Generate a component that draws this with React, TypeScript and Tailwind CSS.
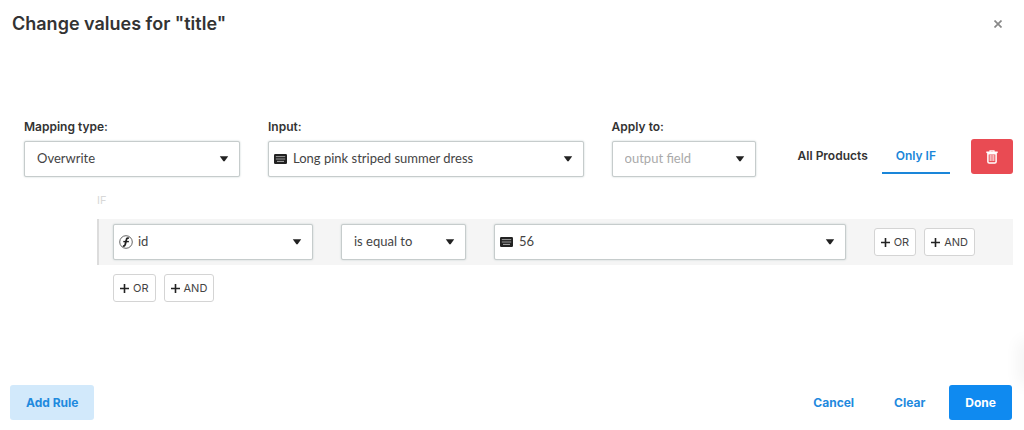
import { useState } from 'react';
import type { ReactNode } from 'react';
import clsx from 'clsx';

interface SelectFieldProps {
  id: string;
  label: string;
  options: string[];
  icon?: ReactNode;
  hideLabel?: boolean;
  muted?: boolean;
  className?: string;
}

function KeyboardIcon() {
  return (
    <svg viewBox="0 0 13 10" className="h-[10px] w-[13px]" aria-hidden="true">
      <rect width="13" height="10" rx="1.2" fill="#222" />
      <path d="M1.8 2.6h9.4M1.8 5h9.4" stroke="#aaa" strokeWidth="0.9" />
      <path d="M3 7.4h7" stroke="#bbb" strokeWidth="0.9" />
    </svg>
  );
}

function FunctionIcon() {
  return (
    <svg viewBox="0 0 14 14" className="h-[14px] w-[14px]" fill="none" stroke="#222" aria-hidden="true">
      <circle cx="7" cy="7" r="6.3" strokeWidth="0.7" />
      <path d="M10 3.3C8.4 2.6 7.6 3.5 7.3 5L6.3 9.2C6 10.8 5.2 11.4 3.9 10.8" strokeWidth="1.8" />
      <path d="M4.3 6.6h5.6" strokeWidth="1.4" />
    </svg>
  );
}

function TrashIcon() {
  return (
    <svg viewBox="0 0 12 14" className="h-[14px] w-[12px]" fill="none" stroke="#fff" aria-hidden="true">
      <path d="M0.3 2.3h11.4" strokeWidth="1.6" />
      <path d="M4 2V0.8h4V2" strokeWidth="1.2" />
      <path d="M1.9 3.8v8c0 .8.5 1.3 1.3 1.3h5.6c.8 0 1.3-.5 1.3-1.3v-8z" strokeWidth="1.5" />
      <path d="M4.2 5v6M6 5v6M7.8 5v6" strokeWidth="0.9" />
    </svg>
  );
}

function PlusIcon() {
  return (
    <svg viewBox="0 0 9 9" className="h-[9px] w-[9px]" stroke="#222" strokeWidth="1.6" aria-hidden="true">
      <path d="M4.5 0v9M0 4.5h9" />
    </svg>
  );
}

function SelectField({ id, label, options, icon, hideLabel, muted, className }: SelectFieldProps) {
  return (
    <div className={className}>
      {!hideLabel && (
        <label htmlFor={id} className="mb-1 block text-[12px] leading-5 font-semibold text-[#333]">
          {label}
        </label>
      )}
      <div className="relative">
        {icon && (
          <span className="pointer-events-none absolute inset-y-0 left-[6px] flex items-center">{icon}</span>
        )}
        <select
          id={id}
          aria-label={hideLabel ? label : undefined}
          className={clsx(
            "block h-9 w-full appearance-none rounded-xs border border-[#c6cccc] bg-white pr-7 font-['Lato',sans-serif] text-[13px] shadow-[0_0_2px_#c3cccc]",
            icon ? 'pl-6' : 'pl-3',
            muted ? 'text-[#aaa]' : 'text-[#444]'
          )}
        >
          {options.map((option) => (
            <option key={option}>{option}</option>
          ))}
        </select>
        <span className="pointer-events-none absolute inset-y-0 right-[11px] flex items-center">
          <svg viewBox="0 0 10 6" className="h-[6px] w-[10px]" aria-hidden="true">
            <path d="M0.8 0.3h8.4L5.8 5q-.8.9-1.6 0z" fill="#222" />
          </svg>
        </span>
      </div>
    </div>
  );
}

function ConditionButtons() {
  return (
    <div className="flex gap-2">
      {['OR', 'AND'].map((operator) => (
        <button
          key={operator}
          type="button"
          className="flex h-7 items-center gap-1 rounded-[3px] border border-[#d4d4d4] bg-white px-[6px] text-[11px] text-[#444]"
        >
          <PlusIcon />
          {operator}
        </button>
      ))}
    </div>
  );
}

export default function App() {
  const [scope, setScope] = useState('Only IF');

  return (
    <main className="relative flex min-h-screen flex-col overflow-hidden bg-white font-['Inter',sans-serif] text-[#333]">
      <header className="flex items-center justify-between py-3 pr-5 pl-3">
        <h1 className="text-[18px] leading-6 font-semibold">Change values for "title"</h1>
        <button type="button" aria-label="Close" className="p-[2px]">
          <svg viewBox="0 0 8 8" className="h-2 w-2" stroke="#888" strokeWidth="1.7" aria-hidden="true">
            <path d="M0.5 0.5l7 7M7.5 0.5l-7 7" />
          </svg>
        </button>
      </header>

      <section className="mt-[69px] flex items-end pr-[11px] pl-6">
        <SelectField id="mapping-type" label="Mapping type:" options={['Overwrite']} className="mr-7 w-[216px]" />
        <SelectField
          id="input-value"
          label="Input:"
          options={['Long pink striped summer dress']}
          icon={<KeyboardIcon />}
          className="mr-7 min-w-0 flex-1"
        />
        <SelectField id="apply-to" label="Apply to:" options={['output field']} muted className="w-36" />
        <div className="mb-[3px] ml-7 flex">
          {['All Products', 'Only IF'].map((name) => (
            <button
              key={name}
              type="button"
              onClick={() => setScope(name)}
              className={clsx(
                'h-[34px] border-b-2 px-[14px] text-[12px] font-semibold whitespace-nowrap',
                scope === name ? 'border-[#1a86d9] text-[#1a86d9]' : 'border-transparent'
              )}
            >
              {name}
            </button>
          ))}
        </div>
        <button
          type="button"
          aria-label="Delete rule"
          className="mb-[3px] ml-[21px] flex h-[35px] w-[42px] items-center justify-center rounded-[3px] bg-[#e94b53]"
        >
          <TrashIcon />
        </button>
      </section>

      <section className="mt-[15px] pr-[11px] pl-[97px]">
        <p className="text-[11px] leading-4 text-[#d8d8d8]">IF</p>
        <div className="mt-[11px] flex h-[46px] items-center border-l-2 border-[#dcdcdc] bg-[#f5f5f5] pr-[38px] pl-[14px]">
          <SelectField id="field" label="Field" options={['id']} icon={<FunctionIcon />} hideLabel className="mr-7 w-[200px]" />
          <SelectField id="operator" label="Operator" options={['is equal to']} hideLabel className="mr-7 w-[125px]" />
          <SelectField
            id="compare-value"
            label="Value"
            options={['56']}
            icon={<KeyboardIcon />}
            hideLabel
            className="mr-7 min-w-0 flex-1"
          />
          <ConditionButtons />
        </div>
        <div className="mt-[9px] pl-4">
          <ConditionButtons />
        </div>
      </section>

      {/* soft edge of the collapsed side tab */}
      <div className="absolute top-[345px] -right-1 h-9 w-1 shadow-[0_0_16px_4px_#00000010]" />

      <footer className="mt-auto flex items-center justify-between pr-3 pb-[10px] pl-[10px] text-[12px] font-bold">
        <button type="button" className="h-[35px] rounded-[3px] bg-[#d2e9fb] px-4 text-[#1f8ade]">
          Add Rule
        </button>
        <div className="flex gap-2">
          <button type="button" className="h-[35px] px-4 text-[#1f8ade]">
            Cancel
          </button>
          <button type="button" className="h-[35px] px-4 text-[#1f8ade]">
            Clear
          </button>
          <button type="button" className="h-[35px] rounded-[3px] bg-[#0f8af0] px-4 text-white">
            Done
          </button>
        </div>
      </footer>
    </main>
  );
}
